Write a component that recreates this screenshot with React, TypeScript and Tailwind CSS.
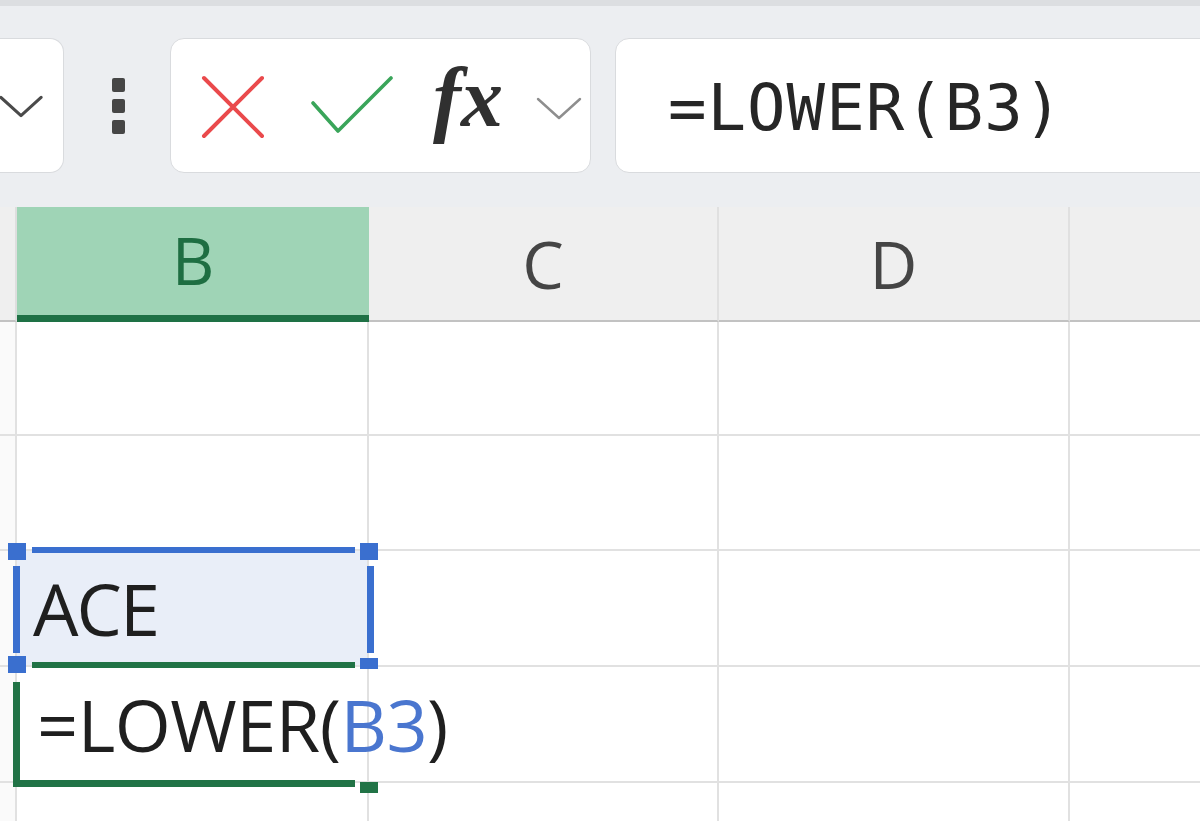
import React from 'react';

const uiFont = { fontFamily: '"Open Sans", "Noto Sans", sans-serif' };

const Chevron: React.FC<{ className?: string; color: string; width?: number }> = ({ className, color, width = 3 }) => (
  <svg viewBox="0 0 46 24" className={className} fill="none">
    <path d="M2 3 L23 22 L44 3" stroke={color} strokeWidth={width} strokeLinecap="round" strokeLinejoin="round" />
  </svg>
);

const Toolbar: React.FC = () => (
  <div className="h-[207px] bg-[#eceef1] border-t-[6px] border-[#dcdee1] pt-[32px] flex items-start">
    {/* name box, cut off on the left */}
    <div className="w-[64px] h-[135px] bg-white rounded-r-[14px] border border-l-0 border-[#d9dbde] flex items-center">
      <Chevron className="w-[44px] h-[24px] -ml-[1px]" color="#4a4a4a" width={3.2} />
    </div>

    {/* vertical dots */}
    <div className="ml-[47px] w-[14px] h-[135px] flex flex-col items-center justify-center gap-[7px]">
      <span className="w-[13px] h-[14px] rounded-[2px] bg-[#464646]" />
      <span className="w-[13px] h-[14px] rounded-[2px] bg-[#464646]" />
      <span className="w-[13px] h-[14px] rounded-[2px] bg-[#464646]" />
    </div>

    {/* cancel / enter / fx */}
    <div className="ml-[45px] w-[421px] h-[135px] bg-white rounded-[14px] border border-[#d9dbde] flex items-center relative">
      <svg viewBox="0 0 64 64" className="absolute left-[30px] top-[36px] w-[64px] h-[64px]" fill="none">
        <path d="M3 3 L61 61 M61 3 L3 61" stroke="#ea4a4c" strokeWidth="4" strokeLinecap="round" />
      </svg>
      <svg viewBox="0 0 82 58" className="absolute left-[140px] top-[37px] w-[82px] h-[58px]" fill="none">
        <path d="M2 27 L27 55 L80 2" stroke="#3aa55a" strokeWidth="3.6" strokeLinecap="round" strokeLinejoin="round" />
      </svg>
      <span
        className="absolute left-[262px] top-[17px] text-[84px] leading-none italic font-bold text-[#303030]"
        style={{ fontFamily: '"Liberation Serif", "DejaVu Serif", serif' }}
      >
        fx
      </span>
      <Chevron className="absolute left-[364px] top-[57px] w-[48px] h-[24px]" color="#8e8e8e" width={2.4} />
    </div>

    {/* formula bar */}
    <div className="ml-[24px] flex-1 -mr-[20px] h-[135px] bg-white rounded-[14px] border border-[#d9dbde] flex items-center pl-[52px]">
      <span
        className="text-[64px] leading-none text-[#262626] mt-[4px] tracking-[1px]"
        style={{ fontFamily: '"DejaVu Sans Mono", "Liberation Mono", monospace' }}
      >
        =LOWER(B3)
      </span>
    </div>
  </div>
);

const cols = 'grid grid-cols-[17px_352px_350px_351px_1fr]';

const HeaderRow: React.FC = () => (
  <div className={`${cols} h-[115px]`} style={uiFont}>
    <div className="bg-[#efefef] border-r-2 border-[#dedede] border-b-2 border-b-[#c2c2c2]" />
    <div className="bg-[#9fd4b6] border-b-[7px] border-[#1e7145] flex items-center justify-center text-[66px] text-[#1e6e42] pb-[4px]">
      B
    </div>
    <div className="bg-[#efefef] border-r-2 border-[#e0e0e0] border-b-2 border-b-[#c2c2c2] flex items-center justify-center text-[66px] text-[#454545]">
      C
    </div>
    <div className="bg-[#efefef] border-r-2 border-[#e0e0e0] border-b-2 border-b-[#c2c2c2] flex items-center justify-center text-[66px] text-[#454545]">
      D
    </div>
    <div className="bg-[#efefef] border-b-2 border-b-[#c2c2c2]" />
  </div>
);

const Row: React.FC<{ h: string; first?: React.ReactNode; selected?: boolean }> = ({ h, first, selected }) => (
  <div className={`${cols} ${h}`}>
    <div className="border-r-2 border-b-2 border-[#e1e1e1] bg-[#fafafa]" />
    <div
      className={`border-r-2 border-b-2 border-[#e1e1e1] flex items-center pl-[16px] text-[72px] leading-none text-[#1f1f1f] ${
        selected ? 'bg-[#e9eef8]' : 'bg-white'
      }`}
      style={uiFont}
    >
      {first}
    </div>
    <div className="border-r-2 border-b-2 border-[#e1e1e1]" />
    <div className="border-r-2 border-b-2 border-[#e1e1e1]" />
    <div className="border-b-2 border-[#e1e1e1]" />
  </div>
);

export default function App() {
  return (
    <div className="w-[1200px] h-[821px] overflow-hidden bg-white relative">
      <Toolbar />
      <HeaderRow />
      <Row h="h-[114px]" />
      <Row h="h-[115px]" />
      <Row h="h-[116px]" selected first={<span className="tracking-[-2px]">ACE</span>} />
      <Row
        h="h-[116px]"
        first={
          <span className="pl-[4px] tracking-[-0.5px]">
            =LOWER(<span className="text-[#4a76cf]">B3</span>)
          </span>
        }
      />
      <Row h="h-[116px]" />

      {/* referenced range B3 (blue) */}
      <div className="absolute left-[32px] top-[547px] w-[323px] h-[6px] bg-[#3a6fcf]" />
      <div className="absolute left-[13px] top-[566px] w-[7px] h-[87px] bg-[#3a6fcf]" />
      <div className="absolute left-[367px] top-[566px] w-[7px] h-[87px] bg-[#3a6fcf]" />
      <div className="absolute left-[8px] top-[543px] w-[18px] h-[17px] bg-[#3a6fcf]" />
      <div className="absolute left-[360px] top-[543px] w-[18px] h-[17px] bg-[#3a6fcf]" />
      <div className="absolute left-[8px] top-[656px] w-[18px] h-[17px] bg-[#3a6fcf]" />
      <div className="absolute left-[360px] top-[658px] w-[18px] h-[11px] bg-[#3a6fcf]" />

      {/* active cell B4 (green) */}
      <div className="absolute left-[32px] top-[662px] w-[323px] h-[6px] bg-[#217346]" />
      <div className="absolute left-[13px] top-[682px] w-[7px] h-[105px] bg-[#217346]" />
      <div className="absolute left-[13px] top-[780px] w-[342px] h-[7px] bg-[#217346]" />
      <div className="absolute left-[360px] top-[782px] w-[18px] h-[11px] bg-[#217346]" />
    </div>
  );
}
